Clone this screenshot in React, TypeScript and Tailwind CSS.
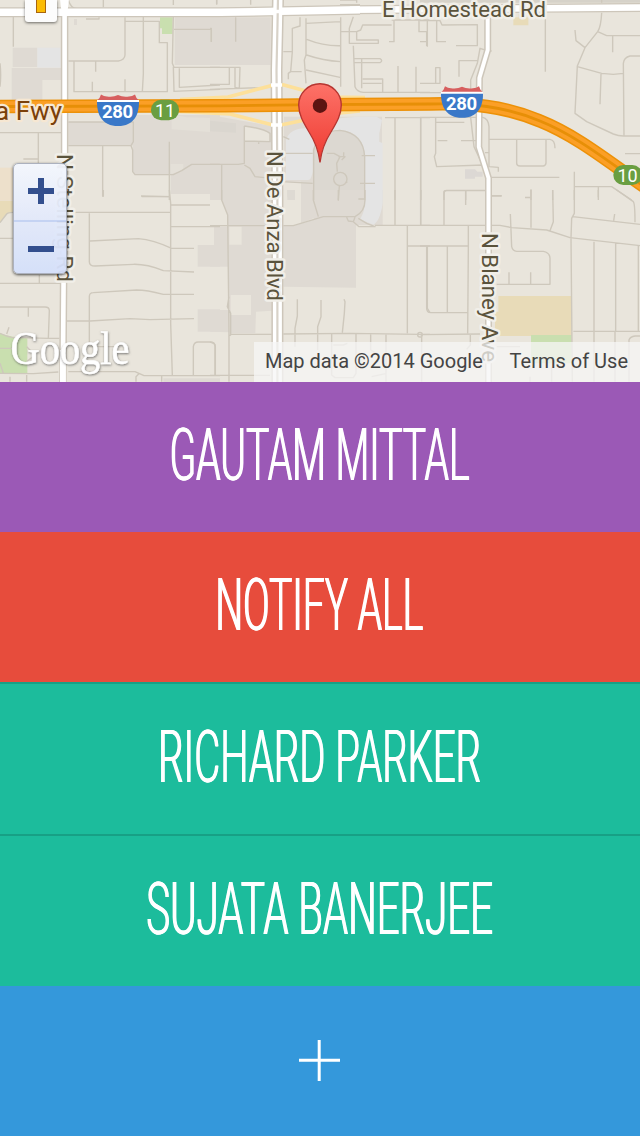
import React from "react";

type Area = { d: string; fill: string };
type Sector = { x: number; y: number; areas: Area[]; streets: string };

const LAND = "#e9e5dc";
const BLOCK = "#dfdad3";
const PAVED = "#e4e4e4";
const PARK = "#c9dfaf";
const SCHOOL = "#e8dbb8";

// Each sector is drawn on its own grid, three units to a pixel.
const sectors: Sector[] = [
  {
    x: 0,
    y: 0,
    areas: [
      { d: "M38 143H112V201H38Z M35 204H183V240H127V300H35Z", fill: BLOCK },
      { d: "M112 143H182V203H112Z", fill: PAVED },
      { d: "M480 52H518V102H486V85H480Z", fill: PARK },
      { d: "M524 52H660V195H524Z M222 57H231V75H222Z", fill: BLOCK },
      { d: "M205 366H400V437H205Z", fill: BLOCK },
      { d: "M400 345H660V580H512V524H405L398 515V437L400 425Z", fill: BLOCK },
      { d: "M515 343L560 352L660 355V398L515 388Z M512 492H550V512L512 522Z", fill: "#e4e0d8" },
      { d: "M0 503H38V600H0Z", fill: "#ede0cb" },
    ],
    streets:
      "M40 47V140 M205 183H355Q374 180 375 165V52 M377 64H478V128H502V275H222V185 M287 183V215 M277 245V275 M375 238V275 M430 50V222L427 275 M520 50L517 190L522 202H660 M522 88H634V126 M538 205V262L660 255 M522 272L520 200 M520 274L660 268 M0 398H185 M115 398V490 M70 477H115 M205 366H400V425L393 437H205 M393 437L398 450V515L405 524H520L545 512L575 493H660 M308 437V590 M508 425V600 M425 590H508 M205 0Q213 26 230 26H520 M520 15V0 M310 22V0 M258 57H297V52 M650 12V0 M0 190Q4 225 0 260",
  },
  {
    x: 210,
    y: 0,
    areas: [
      { d: "M0 52H182V195H0Z", fill: BLOCK },
      { d: "M0 345L185 378V600H0Z M222 350H516V600H222Z", fill: BLOCK },
      { d: "M103 378Q160 385 180 400V425L105 423Z M220 545H273V600H220Z", fill: "#e9e5dc" },
      { d: "M0 362L78 370V398L0 394Z", fill: "#dad6cf" },
      { d: "M228 420Q240 385 285 385L390 355L440 350H500L516 360L508 400V425L518 430V600H465V470Q460 395 390 390Q330 392 308 450V515Q304 540 295 540H228Z", fill: PAVED },
      { d: "M311 600V450Q325 392 390 391Q460 400 464 470V600Z", fill: "#dcd8d1" },
      { d: "M232 570H255V600H232Z", fill: "#dedad3" },
    ],
    streets:
      "M0 202H90L88 265L75 262V202 M0 268L182 262 M58 202V253H0 M77 52V125 M0 85H4V125 M288 55V165L283 180L288 250 M288 70L392 65 M392 52V260 M290 118Q340 138 390 137 M290 165Q340 182 392 185 M288 210L390 232 M270 52V78L247 85V155L242 215H275 M242 215L235 220V238 M220 155H245 M430 50L418 85V130H505V120H440V95H392 M440 95L452 90L458 75H545 M545 60H660 M552 62V125H537 M627 62V95H650V138 M430 137L435 260Q440 275 460 277H660 M432 176H510Q520 182 510 188H432 M455 178V265 M458 237H518V275 M458 250H515 M564 198V277 M618 200V277 M525 353H660 M555 353V600 M632 353V600 M103 378V490L85 493H0 M103 378Q160 385 180 400V425L105 423 M146 423V432 M103 495L120 505L135 530L185 535 M35 495V600 M220 410L238 418 M215 545L308 550 M215 460H308 M350 460H372L390 470L380 490L382 515 M385 470H405L395 480 M401 457V468 M391 517A20 20 0 1 0 391 557A20 20 0 1 0 391 517 M405 550L412 545 M388 558L385 600 M455 467H495 M450 550H495 M311 600V450Q325 392 390 391Q460 400 464 470V600 M390 0H440V8 M390 14H450 M20 0V14 M122 0V14",
  },
  {
    x: 420,
    y: 0,
    areas: [
      { d: "M135 508H165L172 515H188V530H165V536H135Z", fill: "#dcd8d4" },
      { d: "M280 52H296V42H318V52H325V76H280Z", fill: SCHOOL },
      { d: "M0 0H660V8H0Z", fill: "#d6d2c9" },
    ],
    streets:
      "M0 62H60L66 75L172 74V137H108 M22 62V140 M50 62V125H78 M0 125H22 M0 250H60V203H47V250 M0 278H63 M0 352H188Q205 355 207 380V500L235 502V515 M47 352V460L43 470L50 500L190 495 M2 352V600 M47 367H133 M53 422H82 M123 422H170 M117 230V182H172 M215 153H205L180 145L172 190L152 240V352L162 440L190 500 M195 458H205 M376 57V215 M545 0V8 M545 38Q543 80 533 95L495 143L472 198L465 340L500 365L580 402Q595 408 610 408H660 M533 95L560 107H660 M465 90L468 122L495 143 M578 108V157 M472 200L545 220L580 223L610 220 M543 222L540 313 M612 408L610 190Q612 172 630 168H660 M207 418H390Q405 420 405 445 M290 418V490Q290 498 300 498H370Q378 496 378 488V418 M615 461H660 M215 532H418 M463 515V600 M463 560H575L635 600 M535 560V600 M72 600V575Q72 571 80 571H195 M137 571V600 M215 588H245 M333 568V600 M315 593H333 M398 570V600",
  },
  {
    x: 0,
    y: 190,
    areas: [
      { d: "M512 0H660V12H512Z M640 112H660V230H593V165H640Z M593 358H660V425H593Z M490 565H660V576H490Z", fill: BLOCK },
      { d: "M0 430Q30 442 82 445V550H0Z", fill: PARK },
      { d: "M0 32H38V68L20 72L0 98Z", fill: SCHOOL },
      { d: "M0 0H38V32H0Z", fill: "#ede0cb" },
    ],
    streets:
      "M0 98L20 72Q24 67 40 67 M200 67H512 M310 0V20 M423 18L512 20 M508 0L512 40V400L517 555 M512 45H630 M512 110H660 M268 70V215Q268 228 285 228L400 223Q440 222 490 242L582 246 M270 153L415 146Q460 150 515 175H582 M268 465V320Q268 308 280 308L410 300Q440 300 490 313H582 M200 393H270L390 386L450 389L582 386 M0 145H38 M0 280H180 M118 255V280 M0 351H135Q148 351 148 362L145 445H178 M85 351V380 M20 432L27 412 M0 430Q20 440 35 442L145 445 M0 475H40 M0 520L10 550 M80 470L105 495L80 515 M0 550L100 551L175 546 M30 560V575 M80 555V575 M205 545H405L432 557H660 M408 575V560L418 550 M268 470H350 M580 555V470Q582 456 595 456H630Q645 456 645 470V555 M485 557V575",
  },
  {
    x: 210,
    y: 190,
    areas: [
      { d: "M35 0H185V430H60L53 75L35 30Z M0 110H55V230H0Z M0 360H58V427L0 425Z M0 0H30V12H0Z", fill: BLOCK },
      { d: "M58 110H95V164H58Z M62 315H123V375H62Z M138 365L186 362V430H136Z M0 110H12V165H0Z", fill: LAND },
      { d: "M273 0H518V105H330L310 85L273 100Z", fill: BLOCK },
      { d: "M220 108H250L340 80L438 82V293L220 290Z", fill: BLOCK },
      { d: "M465 0H518V40Q510 95 490 104L450 88Q465 65 465 30Z", fill: PAVED },
      { d: "M232 0H255V20L240 28L232 20Z", fill: "#dedad3" },
    ],
    streets:
      "M35 0V30L53 75L57 430V575 M0 107H185 M220 107H250L340 80H435Q465 65 465 30V0 M310 0V30L325 80 M385 0V32 M445 27H462 M410 82L415 93L430 95L435 82 M430 95L447 110H495L470 100L445 85 M495 106H660 M555 0V105 M632 0V105 M592 108V430 M592 168H660 M652 170V355L660 368 M60 433H185 M220 432L420 430L630 433H660 M262 328V378L255 415V470 M333 330V380L323 410V480 M402 328L405 335L403 370L397 428 M57 320L52 350L62 370V435L55 440 M0 456L12 460Q16 462 16 470V555 M0 556H180 M365 433V555L375 563H430L438 550V433 M370 465H400L412 460 M482 433V480L500 490 M528 433V575 M485 560L530 550 M635 433V575 M630 427A7 7 0 1 0 630 441A7 7 0 1 0 630 427",
  },
  {
    x: 420,
    y: 190,
    areas: [
      { d: "M235 318H455V438H225V365H235Z", fill: SCHOOL },
      { d: "M333 435H455V520H333Z", fill: PARK },
    ],
    streets:
      "M0 106H240L275 113L380 120L450 143L660 167 M72 106V10Q72 2 80 2H195 M2 0V105 M137 2V45 M215 17H245 M333 0V113 M315 22H333 M398 0L400 95L390 122 M463 0V70L455 85L453 143L457 575 M458 80L660 103 M581 92L584 72 M535 0V22 M590 0L640 35Q645 40 645 97 M0 168H145 M145 108V175L143 430 M20 168V355Q20 368 32 368H143 M82 168V368 M0 434L180 432 M151 434V465L140 478 M271 72L275 170Q278 183 290 184H370Q390 188 390 205V283H230 M267 247V283 M332 247V283 M522 155V575 M587 160V425 M585 425V575 M655 165V425 M460 424H660 M627 575V450Q630 440 645 438H660 M230 470H300 M395 530V575 M330 560V575",
  },
];

const FREEWAY =
  "M-5 106.5L220 105.8L320 104.7L430 104C470 103 505 106 540 121C575 135 605 159 645 187";
const DE_ANZA = "M278 -2L277.5 25L276.5 70L277 130L277.4 200V384";
const BLANEY = "M487.7 12V50L479.4 78L478.8 147L488.5 178V384";
const STELLING = "M64.6 10V190L63.6 280L62.8 384";

function Shield({ x, y }: { x: number; y: number }) {
  return (
    <g transform={`translate(${x} ${y})`}>
      <path d="M0 6Q3 4 4 0Q7 2 10 2Q16 3 21 .5Q26 3 32 2Q35 2 38 0Q39 4 42 6Z" fill="#d75f5f" />
      <path d="M0 5.4H42V8H0Z" fill="#fff" />
      <path d="M0 7.4H42C42 20 37 31.5 21 31.5C5 31.5 0 20 0 7.4Z" fill="#3a78c8" />
      <text x="20.6" y="23.8" textAnchor="middle" textLength="31" fontSize="18.5" fontWeight="700" fill="#fff">
        280
      </text>
    </g>
  );
}

function RoadLabel({
  x,
  y,
  length,
  children,
}: {
  x: number;
  y: number;
  length: number;
  children: string;
}) {
  return (
    <text
      transform={`translate(${x} ${y}) rotate(90)`}
      textLength={length}
      lengthAdjust="spacingAndGlyphs"
      fontSize="22.5"
      fill="#5a533c"
      stroke="#f1efe9"
      strokeWidth="5"
      strokeLinejoin="round"
      paintOrder="stroke"
    >
      {children}
    </text>
  );
}

function StreetMap() {
  return (
    <svg
      className="block h-[382px] w-[640px] font-[Roboto,sans-serif]"
      viewBox="0 0 640 382"
      role="img"
      aria-label="Map"
    >
      <defs>
        <linearGradient id="pin" x1="0" y1="0" x2="0" y2="1">
          <stop offset="0" stopColor="#fd7268" />
          <stop offset="1" stopColor="#ee3a31" />
        </linearGradient>
        <filter id="logoShadow" x="-10%" y="-20%" width="120%" height="150%">
          <feDropShadow dx="0.5" dy="1" stdDeviation="1.2" floodColor="#555" floodOpacity="0.8" />
        </filter>
      </defs>
      <rect width="640" height="382" fill={LAND} />
      {sectors.map((s) => (
        <g key={`a${s.x}-${s.y}`} transform={`translate(${s.x} ${s.y}) scale(.33333)`}>
          {s.areas.map((a) => (
            <path key={a.d} d={a.d} fill={a.fill} />
          ))}
        </g>
      ))}
      {sectors.map((s) => (
        <path
          key={`s${s.x}-${s.y}`}
          transform={`translate(${s.x} ${s.y}) scale(.33333)`}
          d={s.streets}
          fill="none"
          stroke="#cec8bc"
          strokeWidth="4.2"
          strokeLinejoin="round"
        />
      ))}

      <g fill="none" strokeLinejoin="round">
        <g stroke="#cdc6ba">
          <path d="M-2 12.3H220L360 9.8" strokeWidth="10" />
          <path d="M350 9.8L640 7.5" strokeWidth="9" />
          <path d={STELLING} strokeWidth="7.5" />
          <path d={BLANEY} strokeWidth="7" />
          <path d={DE_ANZA} strokeWidth="12" />
        </g>
        <g stroke="#fde09a" strokeWidth="3.6">
          <path d="M180 99.5L228 97L272 85.5 M282 84.5L306 91L330 97L365 97.5" />
          <path d="M180 111.5L230 114L272 124.7 M282 124.7L305 120L330 114L360 111" />
        </g>
        <g stroke="#fff">
          <path d="M-2 12.3H220L360 9.8" strokeWidth="7.5" />
          <path d="M350 9.8L640 7.5" strokeWidth="6.5" />
          <path d={STELLING} strokeWidth="4.6" />
          <path d="M60 -1H69L67 16H62Z" fill="#fff" stroke="none" />
          <path d="M62.9 350V384" strokeWidth="6" />
          <path d={BLANEY} strokeWidth="4" />
          <path d={DE_ANZA} strokeWidth="9" />
        </g>
        <path d={DE_ANZA} stroke="#d8d2c8" strokeWidth="2.2" />
        <path d="M271 85H282 M271 125H282 M272 11.5H284" stroke="#fff" strokeWidth="3.5" />
        <path d={FREEWAY} stroke="#ec9108" strokeWidth="13.5" />
        <path d={FREEWAY} stroke="#fb9f26" strokeWidth="10.5" />
        <path d={FREEWAY} stroke="#e78f07" strokeWidth="2.8" />
      </g>

      <text x="382" y="16.6" textLength="164" lengthAdjust="spacingAndGlyphs" fontSize="22.5" fill="#5a533c" stroke="#f1efe9" strokeWidth="5" strokeLinejoin="round" paintOrder="stroke">
        E Homestead Rd
      </text>
      <RoadLabel x={267} y={151} length={150}>N De Anza Blvd</RoadLabel>
      <RoadLabel x={481.5} y={233} length={129}>N Blaney Ave</RoadLabel>
      <RoadLabel x={57} y={154} length={128}>N Stelling Rd</RoadLabel>
      <text x="-5" y="119.7" textLength="67" lengthAdjust="spacingAndGlyphs" fontSize="25" fill="#7b4009" stroke="#f6e7d2" strokeWidth="4.5" strokeLinejoin="round" paintOrder="stroke">
        a Fwy
      </text>

      <Shield x={97} y={94.5} />
      <Shield x={441} y={86.3} />
      <rect x="151" y="99.7" width="28" height="20.5" rx="10" fill="#6a9e41" />
      <text x="165" y="116.5" textAnchor="middle" fontSize="18" fill="#fff">11</text>
      <rect x="613.3" y="165" width="29" height="20" rx="10" fill="#6a9e41" />
      <text x="627.5" y="181.5" textAnchor="middle" fontSize="18" fill="#fff">10</text>

      <path
        d="M320 162.5C318.7 152 315.5 142 309 132C303 122 298.7 114.5 298.7 105A21.3 21.3 0 0 1 341.3 105C341.3 114.5 337 122 331 132C324.5 142 321.3 152 320 162.5Z"
        fill="url(#pin)"
        stroke="#b63530"
        strokeWidth="1.3"
      />
      <circle cx="320" cy="105.7" r="7.2" fill="#5c1412" />
      <text x="10.5" y="363.5" textLength="119" lengthAdjust="spacingAndGlyphs" fontSize="47" fill="#fff" stroke="#fff" strokeWidth="0.5" filter="url(#logoShadow)" className="font-['Liberation_Serif',serif]">
        Google
      </text>
    </svg>
  );
}

function MapPanel() {
  return (
    <section className="relative h-[382px] overflow-hidden">
      <StreetMap />
      <div className="absolute left-[25px] top-0 flex h-[22px] w-8 justify-center rounded-b-[3px] bg-[#fcfcfc] shadow-[0_1px_3px_rgba(0,0,0,0.55)]">
        <span className="h-[13px] w-[10px] border border-t-0 border-[#a8650f] bg-[#fbbc05]" />
      </div>
      <div className="absolute left-[13px] top-[163px] flex h-[111px] w-[54px] flex-col overflow-hidden rounded-[5px] border border-[#a9afbd] bg-linear-to-b from-[#f4f7fe] via-[#e3eafb] to-[#d5e0fb] opacity-95 shadow-[0_1px_3px_rgba(0,0,0,0.7)]">
        <button aria-label="Zoom in" className="flex h-[58px] items-center justify-center border-b-2 border-[#c4d3f5] pb-[2px] pl-px">
          <svg className="h-[26px] w-[26px]" viewBox="0 0 26 26">
            <path d="M10 0H16V10H26V16H16V26H10V16H0V10H10Z" fill="#2a478a" />
          </svg>
        </button>
        <button aria-label="Zoom out" className="flex flex-1 items-center justify-center pl-px pt-[3px]">
          <span className="h-[6px] w-[26px] bg-[#2a478a]" />
        </button>
      </div>
      <div className="absolute bottom-0 right-0 flex h-10 w-[386px] items-center justify-between bg-[#f5f5f5]/75 pb-[2px] pl-[11px] pr-3 font-[Roboto,sans-serif] text-[20px] leading-none text-[#444]">
        <span className="whitespace-nowrap">Map data ©2014 Google</span>
        <span className="whitespace-nowrap">Terms of Use</span>
      </div>
    </section>
  );
}

function Contact({ label, row, text }: { label: string; row: string; text: string }) {
  return (
    <button className={`flex w-full items-center justify-center overflow-hidden pb-[3px] pr-px ${row}`}>
      <span
        className={`whitespace-nowrap font-[Roboto,sans-serif] text-[73px] font-light leading-none text-white [text-shadow:1px_0_0_#fff,-1px_0_0_#fff] ${text}`}
      >
        {label}
      </span>
    </button>
  );
}

export default function App() {
  return (
    <main className="flex h-[1136px] w-[640px] flex-col overflow-hidden bg-[#3498db]">
      <MapPanel />
      <Contact label="GAUTAM MITTAL" row="h-[150px] bg-[#9b59b6]" text="scale-x-[0.535]" />
      <Contact label="NOTIFY ALL" row="h-[150px] bg-[#e74c3c]" text="scale-x-[0.535]" />
      <Contact label="RICHARD PARKER" row="h-[152px] border-t-2 border-[#17a085] bg-[#1cbc9c]" text="scale-x-[0.548]" />
      <Contact label="SUJATA BANERJEE" row="h-[152px] border-t-2 border-[#17a085] bg-[#1cbc9c]" text="scale-x-[0.551]" />
      <button aria-label="Add" className="flex h-[150px] w-full items-center justify-center bg-[#3498db] pb-[2px] pr-[2px]">
        <svg className="h-[41px] w-[41px]" viewBox="0 0 41 41">
          <path d="M20.2 0V41 M0 20.2H41" stroke="#fff" strokeWidth="3" />
        </svg>
      </button>
    </main>
  );
}
